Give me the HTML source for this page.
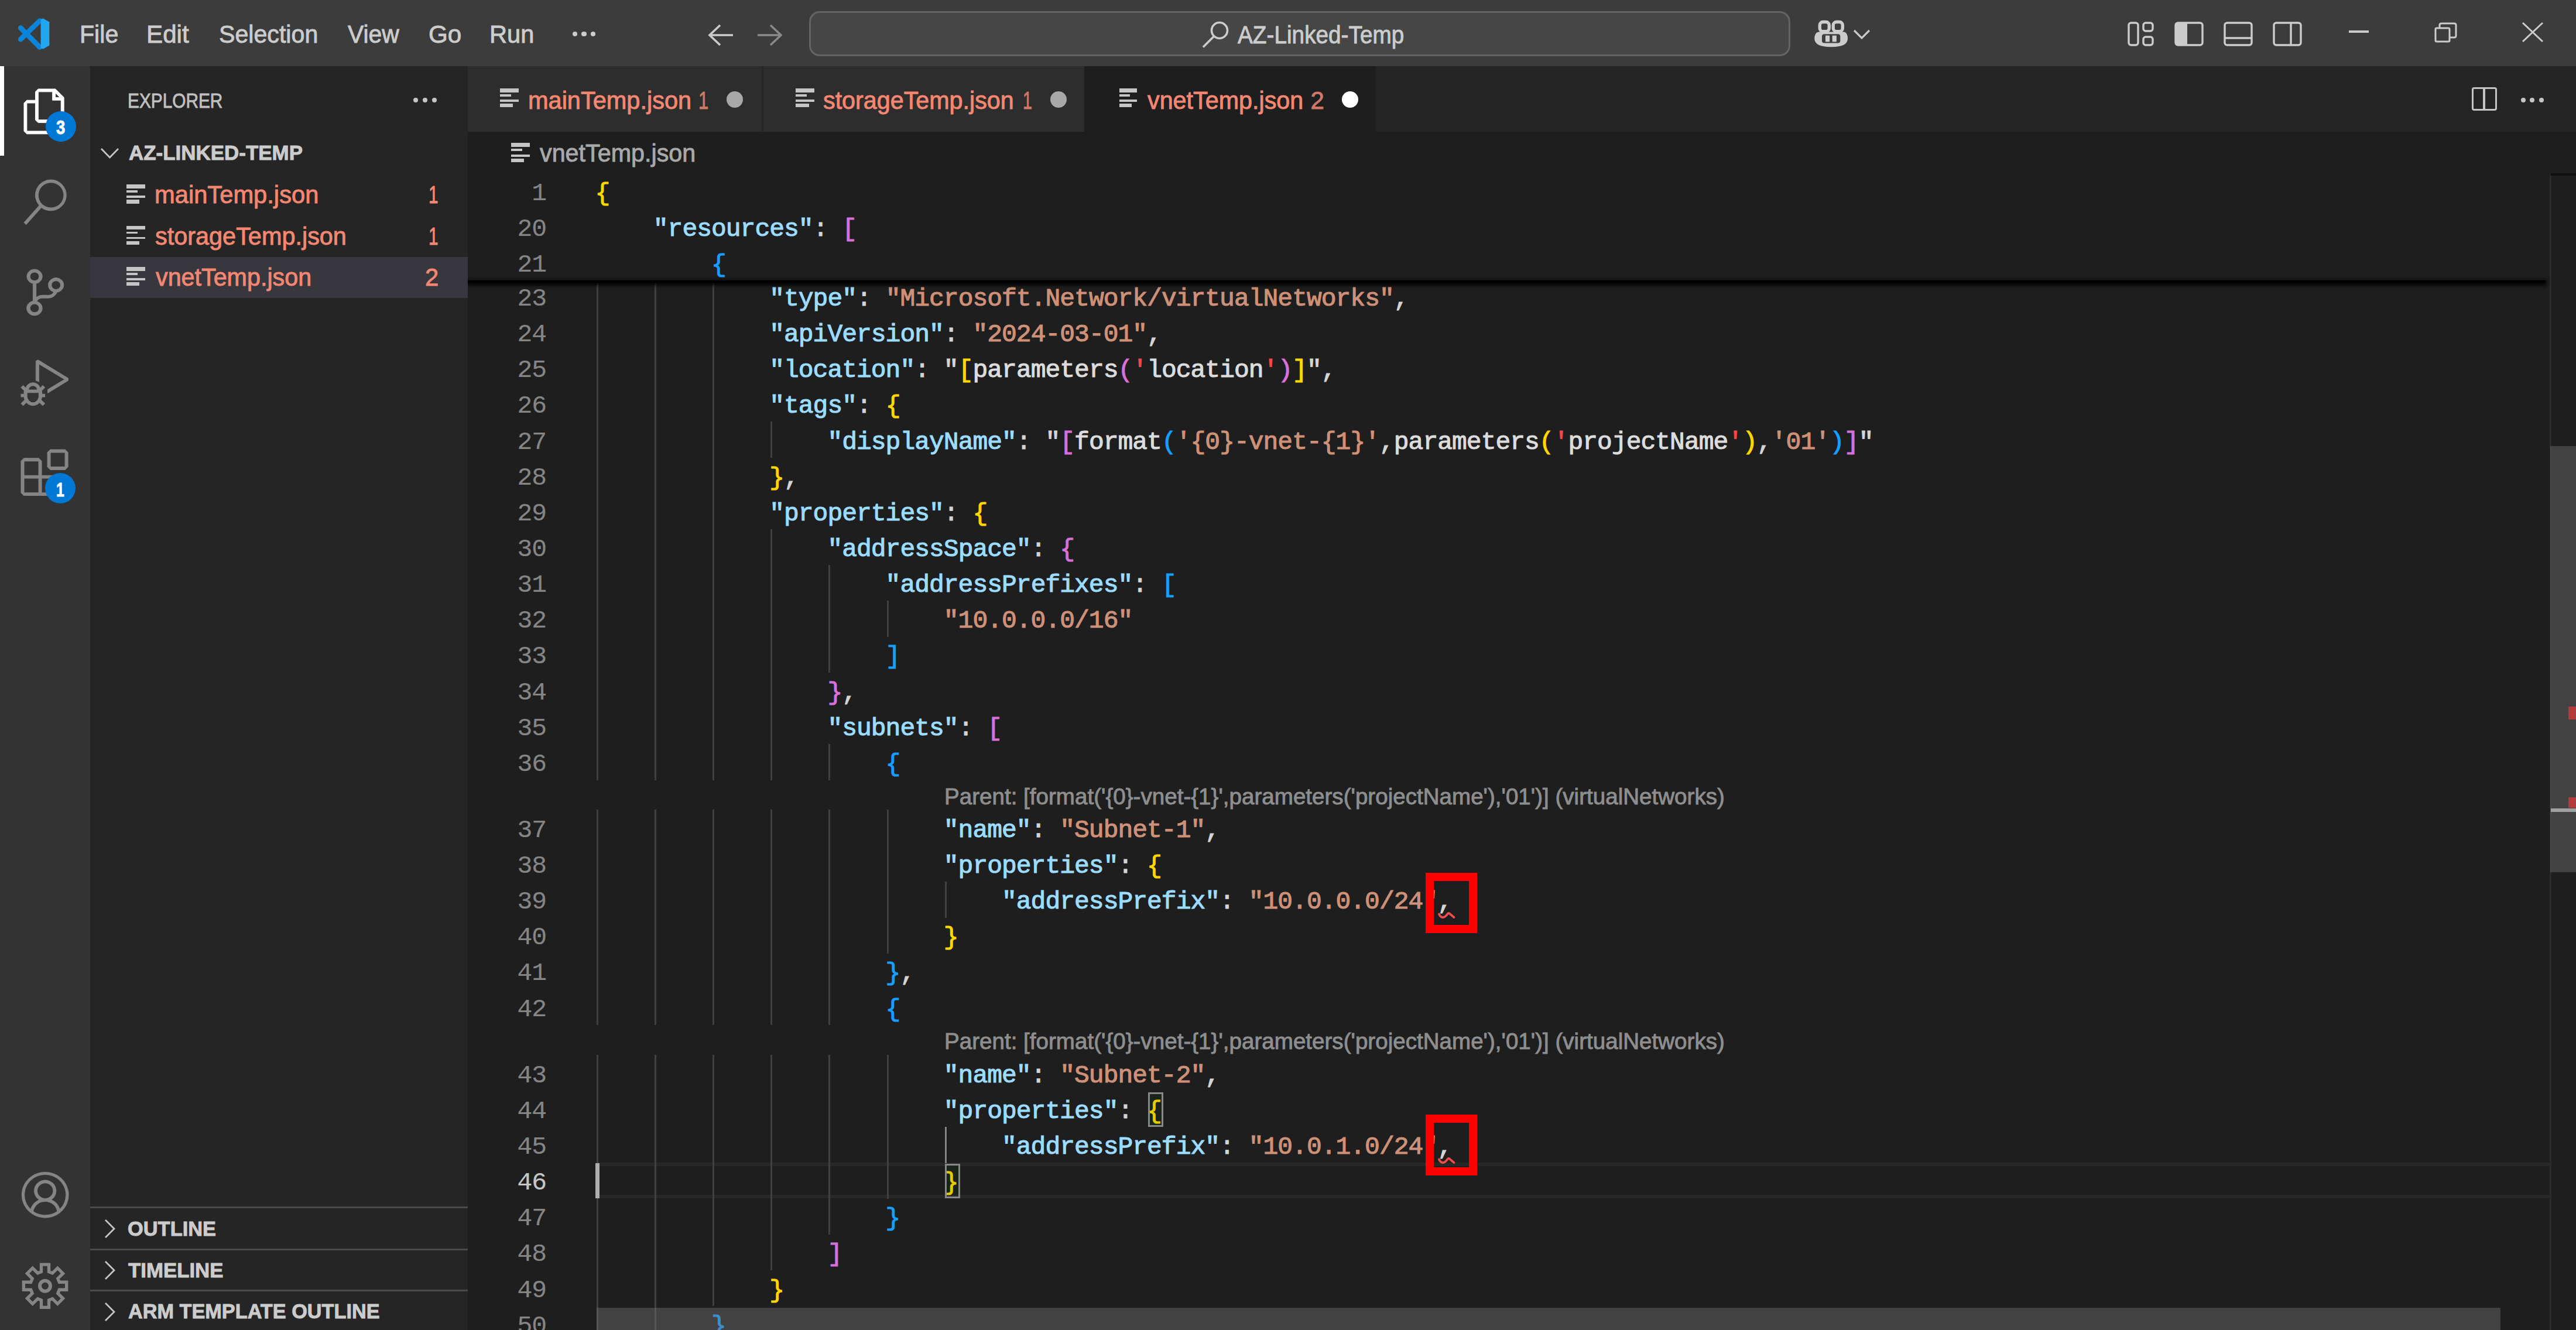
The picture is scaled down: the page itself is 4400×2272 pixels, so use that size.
<!DOCTYPE html><html><head><meta charset="utf-8"><title>vnetTemp.json - AZ-Linked-Temp</title><style>
html,body{margin:0;padding:0;width:4400px;height:2272px;overflow:hidden;background:#1E1E1E;}
.a{position:absolute;white-space:pre;}
.t{-webkit-text-stroke:0.9px;}
.m{position:absolute;white-space:pre;font-family:"Liberation Mono",monospace;-webkit-text-stroke:1.1px;}
svg{position:absolute;overflow:visible;}
</style></head><body>
<div class="a" style="left:1019.0px;top:1986.2px;width:3337.0px;height:6.0px;background:#282828;"></div>
<div class="a" style="left:1019.0px;top:2041.4px;width:3337.0px;height:6.0px;background:#282828;"></div>
<div class="a" style="left:1018.6px;top:475.5px;width:3.0px;height:62.4px;background:#404040;"></div>
<div class="a" style="left:1117.8px;top:475.5px;width:3.0px;height:62.4px;background:#404040;"></div>
<div class="a" style="left:1217.0px;top:475.5px;width:3.0px;height:62.4px;background:#404040;"></div>
<div class="a" style="left:1018.6px;top:536.6px;width:3.0px;height:62.4px;background:#404040;"></div>
<div class="a" style="left:1117.8px;top:536.6px;width:3.0px;height:62.4px;background:#404040;"></div>
<div class="a" style="left:1217.0px;top:536.6px;width:3.0px;height:62.4px;background:#404040;"></div>
<div class="a" style="left:1018.6px;top:597.8px;width:3.0px;height:62.4px;background:#404040;"></div>
<div class="a" style="left:1117.8px;top:597.8px;width:3.0px;height:62.4px;background:#404040;"></div>
<div class="a" style="left:1217.0px;top:597.8px;width:3.0px;height:62.4px;background:#404040;"></div>
<div class="a" style="left:1018.6px;top:658.9px;width:3.0px;height:62.4px;background:#404040;"></div>
<div class="a" style="left:1117.8px;top:658.9px;width:3.0px;height:62.4px;background:#404040;"></div>
<div class="a" style="left:1217.0px;top:658.9px;width:3.0px;height:62.4px;background:#404040;"></div>
<div class="a" style="left:1018.6px;top:720.1px;width:3.0px;height:62.4px;background:#404040;"></div>
<div class="a" style="left:1117.8px;top:720.1px;width:3.0px;height:62.4px;background:#404040;"></div>
<div class="a" style="left:1217.0px;top:720.1px;width:3.0px;height:62.4px;background:#404040;"></div>
<div class="a" style="left:1316.2px;top:720.1px;width:3.0px;height:62.4px;background:#404040;"></div>
<div class="a" style="left:1018.6px;top:781.2px;width:3.0px;height:62.4px;background:#404040;"></div>
<div class="a" style="left:1117.8px;top:781.2px;width:3.0px;height:62.4px;background:#404040;"></div>
<div class="a" style="left:1217.0px;top:781.2px;width:3.0px;height:62.4px;background:#404040;"></div>
<div class="a" style="left:1018.6px;top:842.4px;width:3.0px;height:62.4px;background:#404040;"></div>
<div class="a" style="left:1117.8px;top:842.4px;width:3.0px;height:62.4px;background:#404040;"></div>
<div class="a" style="left:1217.0px;top:842.4px;width:3.0px;height:62.4px;background:#404040;"></div>
<div class="a" style="left:1018.6px;top:903.6px;width:3.0px;height:62.4px;background:#404040;"></div>
<div class="a" style="left:1117.8px;top:903.6px;width:3.0px;height:62.4px;background:#404040;"></div>
<div class="a" style="left:1217.0px;top:903.6px;width:3.0px;height:62.4px;background:#404040;"></div>
<div class="a" style="left:1316.2px;top:903.6px;width:3.0px;height:62.4px;background:#404040;"></div>
<div class="a" style="left:1018.6px;top:964.7px;width:3.0px;height:62.4px;background:#404040;"></div>
<div class="a" style="left:1117.8px;top:964.7px;width:3.0px;height:62.4px;background:#404040;"></div>
<div class="a" style="left:1217.0px;top:964.7px;width:3.0px;height:62.4px;background:#404040;"></div>
<div class="a" style="left:1316.2px;top:964.7px;width:3.0px;height:62.4px;background:#404040;"></div>
<div class="a" style="left:1415.4px;top:964.7px;width:3.0px;height:62.4px;background:#404040;"></div>
<div class="a" style="left:1018.6px;top:1025.9px;width:3.0px;height:62.3px;background:#404040;"></div>
<div class="a" style="left:1117.8px;top:1025.9px;width:3.0px;height:62.3px;background:#404040;"></div>
<div class="a" style="left:1217.0px;top:1025.9px;width:3.0px;height:62.3px;background:#404040;"></div>
<div class="a" style="left:1316.2px;top:1025.9px;width:3.0px;height:62.3px;background:#404040;"></div>
<div class="a" style="left:1415.4px;top:1025.9px;width:3.0px;height:62.3px;background:#404040;"></div>
<div class="a" style="left:1514.6px;top:1025.9px;width:3.0px;height:62.3px;background:#404040;"></div>
<div class="a" style="left:1018.6px;top:1087.0px;width:3.0px;height:62.3px;background:#404040;"></div>
<div class="a" style="left:1117.8px;top:1087.0px;width:3.0px;height:62.3px;background:#404040;"></div>
<div class="a" style="left:1217.0px;top:1087.0px;width:3.0px;height:62.3px;background:#404040;"></div>
<div class="a" style="left:1316.2px;top:1087.0px;width:3.0px;height:62.3px;background:#404040;"></div>
<div class="a" style="left:1415.4px;top:1087.0px;width:3.0px;height:62.3px;background:#404040;"></div>
<div class="a" style="left:1018.6px;top:1148.2px;width:3.0px;height:62.3px;background:#404040;"></div>
<div class="a" style="left:1117.8px;top:1148.2px;width:3.0px;height:62.3px;background:#404040;"></div>
<div class="a" style="left:1217.0px;top:1148.2px;width:3.0px;height:62.3px;background:#404040;"></div>
<div class="a" style="left:1316.2px;top:1148.2px;width:3.0px;height:62.3px;background:#404040;"></div>
<div class="a" style="left:1018.6px;top:1209.3px;width:3.0px;height:62.3px;background:#404040;"></div>
<div class="a" style="left:1117.8px;top:1209.3px;width:3.0px;height:62.3px;background:#404040;"></div>
<div class="a" style="left:1217.0px;top:1209.3px;width:3.0px;height:62.3px;background:#404040;"></div>
<div class="a" style="left:1316.2px;top:1209.3px;width:3.0px;height:62.3px;background:#404040;"></div>
<div class="a" style="left:1018.6px;top:1270.5px;width:3.0px;height:62.3px;background:#404040;"></div>
<div class="a" style="left:1117.8px;top:1270.5px;width:3.0px;height:62.3px;background:#404040;"></div>
<div class="a" style="left:1217.0px;top:1270.5px;width:3.0px;height:62.3px;background:#404040;"></div>
<div class="a" style="left:1316.2px;top:1270.5px;width:3.0px;height:62.3px;background:#404040;"></div>
<div class="a" style="left:1415.4px;top:1270.5px;width:3.0px;height:62.3px;background:#404040;"></div>
<div class="a" style="left:1018.6px;top:1383.3px;width:3.0px;height:62.3px;background:#404040;"></div>
<div class="a" style="left:1117.8px;top:1383.3px;width:3.0px;height:62.3px;background:#404040;"></div>
<div class="a" style="left:1217.0px;top:1383.3px;width:3.0px;height:62.3px;background:#404040;"></div>
<div class="a" style="left:1316.2px;top:1383.3px;width:3.0px;height:62.3px;background:#404040;"></div>
<div class="a" style="left:1415.4px;top:1383.3px;width:3.0px;height:62.3px;background:#404040;"></div>
<div class="a" style="left:1514.6px;top:1383.3px;width:3.0px;height:62.3px;background:#404040;"></div>
<div class="a" style="left:1018.6px;top:1444.5px;width:3.0px;height:62.3px;background:#404040;"></div>
<div class="a" style="left:1117.8px;top:1444.5px;width:3.0px;height:62.3px;background:#404040;"></div>
<div class="a" style="left:1217.0px;top:1444.5px;width:3.0px;height:62.3px;background:#404040;"></div>
<div class="a" style="left:1316.2px;top:1444.5px;width:3.0px;height:62.3px;background:#404040;"></div>
<div class="a" style="left:1415.4px;top:1444.5px;width:3.0px;height:62.3px;background:#404040;"></div>
<div class="a" style="left:1514.6px;top:1444.5px;width:3.0px;height:62.3px;background:#404040;"></div>
<div class="a" style="left:1018.6px;top:1505.6px;width:3.0px;height:62.3px;background:#404040;"></div>
<div class="a" style="left:1117.8px;top:1505.6px;width:3.0px;height:62.3px;background:#404040;"></div>
<div class="a" style="left:1217.0px;top:1505.6px;width:3.0px;height:62.3px;background:#404040;"></div>
<div class="a" style="left:1316.2px;top:1505.6px;width:3.0px;height:62.3px;background:#404040;"></div>
<div class="a" style="left:1415.4px;top:1505.6px;width:3.0px;height:62.3px;background:#404040;"></div>
<div class="a" style="left:1514.6px;top:1505.6px;width:3.0px;height:62.3px;background:#404040;"></div>
<div class="a" style="left:1613.8px;top:1505.6px;width:3.0px;height:62.3px;background:#404040;"></div>
<div class="a" style="left:1018.6px;top:1566.8px;width:3.0px;height:62.3px;background:#404040;"></div>
<div class="a" style="left:1117.8px;top:1566.8px;width:3.0px;height:62.3px;background:#404040;"></div>
<div class="a" style="left:1217.0px;top:1566.8px;width:3.0px;height:62.3px;background:#404040;"></div>
<div class="a" style="left:1316.2px;top:1566.8px;width:3.0px;height:62.3px;background:#404040;"></div>
<div class="a" style="left:1415.4px;top:1566.8px;width:3.0px;height:62.3px;background:#404040;"></div>
<div class="a" style="left:1514.6px;top:1566.8px;width:3.0px;height:62.3px;background:#404040;"></div>
<div class="a" style="left:1018.6px;top:1627.9px;width:3.0px;height:62.3px;background:#404040;"></div>
<div class="a" style="left:1117.8px;top:1627.9px;width:3.0px;height:62.3px;background:#404040;"></div>
<div class="a" style="left:1217.0px;top:1627.9px;width:3.0px;height:62.3px;background:#404040;"></div>
<div class="a" style="left:1316.2px;top:1627.9px;width:3.0px;height:62.3px;background:#404040;"></div>
<div class="a" style="left:1415.4px;top:1627.9px;width:3.0px;height:62.3px;background:#404040;"></div>
<div class="a" style="left:1018.6px;top:1689.1px;width:3.0px;height:62.3px;background:#404040;"></div>
<div class="a" style="left:1117.8px;top:1689.1px;width:3.0px;height:62.3px;background:#404040;"></div>
<div class="a" style="left:1217.0px;top:1689.1px;width:3.0px;height:62.3px;background:#404040;"></div>
<div class="a" style="left:1316.2px;top:1689.1px;width:3.0px;height:62.3px;background:#404040;"></div>
<div class="a" style="left:1415.4px;top:1689.1px;width:3.0px;height:62.3px;background:#404040;"></div>
<div class="a" style="left:1018.6px;top:1802.2px;width:3.0px;height:62.3px;background:#404040;"></div>
<div class="a" style="left:1117.8px;top:1802.2px;width:3.0px;height:62.3px;background:#404040;"></div>
<div class="a" style="left:1217.0px;top:1802.2px;width:3.0px;height:62.3px;background:#404040;"></div>
<div class="a" style="left:1316.2px;top:1802.2px;width:3.0px;height:62.3px;background:#404040;"></div>
<div class="a" style="left:1415.4px;top:1802.2px;width:3.0px;height:62.3px;background:#404040;"></div>
<div class="a" style="left:1514.6px;top:1802.2px;width:3.0px;height:62.3px;background:#404040;"></div>
<div class="a" style="left:1018.6px;top:1863.4px;width:3.0px;height:62.3px;background:#404040;"></div>
<div class="a" style="left:1117.8px;top:1863.4px;width:3.0px;height:62.3px;background:#404040;"></div>
<div class="a" style="left:1217.0px;top:1863.4px;width:3.0px;height:62.3px;background:#404040;"></div>
<div class="a" style="left:1316.2px;top:1863.4px;width:3.0px;height:62.3px;background:#404040;"></div>
<div class="a" style="left:1415.4px;top:1863.4px;width:3.0px;height:62.3px;background:#404040;"></div>
<div class="a" style="left:1514.6px;top:1863.4px;width:3.0px;height:62.3px;background:#404040;"></div>
<div class="a" style="left:1018.6px;top:1924.5px;width:3.0px;height:62.3px;background:#404040;"></div>
<div class="a" style="left:1117.8px;top:1924.5px;width:3.0px;height:62.3px;background:#404040;"></div>
<div class="a" style="left:1217.0px;top:1924.5px;width:3.0px;height:62.3px;background:#404040;"></div>
<div class="a" style="left:1316.2px;top:1924.5px;width:3.0px;height:62.3px;background:#404040;"></div>
<div class="a" style="left:1415.4px;top:1924.5px;width:3.0px;height:62.3px;background:#404040;"></div>
<div class="a" style="left:1514.6px;top:1924.5px;width:3.0px;height:62.3px;background:#404040;"></div>
<div class="a" style="left:1613.8px;top:1924.5px;width:3.0px;height:62.3px;background:#858585;"></div>
<div class="a" style="left:1018.6px;top:1985.7px;width:3.0px;height:62.3px;background:#404040;"></div>
<div class="a" style="left:1117.8px;top:1985.7px;width:3.0px;height:62.3px;background:#404040;"></div>
<div class="a" style="left:1217.0px;top:1985.7px;width:3.0px;height:62.3px;background:#404040;"></div>
<div class="a" style="left:1316.2px;top:1985.7px;width:3.0px;height:62.3px;background:#404040;"></div>
<div class="a" style="left:1415.4px;top:1985.7px;width:3.0px;height:62.3px;background:#404040;"></div>
<div class="a" style="left:1514.6px;top:1985.7px;width:3.0px;height:62.3px;background:#404040;"></div>
<div class="a" style="left:1018.6px;top:2046.8px;width:3.0px;height:62.3px;background:#404040;"></div>
<div class="a" style="left:1117.8px;top:2046.8px;width:3.0px;height:62.3px;background:#404040;"></div>
<div class="a" style="left:1217.0px;top:2046.8px;width:3.0px;height:62.3px;background:#404040;"></div>
<div class="a" style="left:1316.2px;top:2046.8px;width:3.0px;height:62.3px;background:#404040;"></div>
<div class="a" style="left:1415.4px;top:2046.8px;width:3.0px;height:62.3px;background:#404040;"></div>
<div class="a" style="left:1018.6px;top:2108.0px;width:3.0px;height:62.3px;background:#404040;"></div>
<div class="a" style="left:1117.8px;top:2108.0px;width:3.0px;height:62.3px;background:#404040;"></div>
<div class="a" style="left:1217.0px;top:2108.0px;width:3.0px;height:62.3px;background:#404040;"></div>
<div class="a" style="left:1316.2px;top:2108.0px;width:3.0px;height:62.3px;background:#404040;"></div>
<div class="a" style="left:1018.6px;top:2169.1px;width:3.0px;height:62.3px;background:#404040;"></div>
<div class="a" style="left:1117.8px;top:2169.1px;width:3.0px;height:62.3px;background:#404040;"></div>
<div class="a" style="left:1217.0px;top:2169.1px;width:3.0px;height:62.3px;background:#404040;"></div>
<div class="a" style="left:1018.6px;top:2230.2px;width:3.0px;height:62.3px;background:#404040;"></div>
<div class="a" style="left:1117.8px;top:2230.2px;width:3.0px;height:62.3px;background:#404040;"></div>
<div class="m" style="left:1314.2px;top:488.9px;font-size:43.0px;line-height:43.0px;letter-spacing:-1.00px"><span style="color:#9CDCFE">"type"</span><span style="color:#D4D4D4">: </span><span style="color:#CE9178">"Microsoft.Network/virtualNetworks"</span><span style="color:#D4D4D4">,</span></div>
<div class="m" style="-webkit-text-stroke:0.2px;left:883.4px;top:488.9px;font-size:43.0px;line-height:43.0px;letter-spacing:-1.00px;color:#858585">23</div>
<div class="m" style="left:1314.2px;top:550.1px;font-size:43.0px;line-height:43.0px;letter-spacing:-1.00px"><span style="color:#9CDCFE">"apiVersion"</span><span style="color:#D4D4D4">: </span><span style="color:#CE9178">"2024-03-01"</span><span style="color:#D4D4D4">,</span></div>
<div class="m" style="-webkit-text-stroke:0.2px;left:883.4px;top:550.1px;font-size:43.0px;line-height:43.0px;letter-spacing:-1.00px;color:#858585">24</div>
<div class="m" style="left:1314.2px;top:611.2px;font-size:43.0px;line-height:43.0px;letter-spacing:-1.00px"><span style="color:#9CDCFE">"location"</span><span style="color:#D4D4D4">: </span><span style="color:#D4D4D4">"</span><span style="color:#FFD700">[</span><span style="color:#DCDCDC">parameters</span><span style="color:#DA70D6">(</span><span style="color:#F44747">'</span><span style="color:#DCDCDC">location</span><span style="color:#F44747">'</span><span style="color:#DA70D6">)</span><span style="color:#FFD700">]</span><span style="color:#D4D4D4">"</span><span style="color:#D4D4D4">,</span></div>
<div class="m" style="-webkit-text-stroke:0.2px;left:883.4px;top:611.2px;font-size:43.0px;line-height:43.0px;letter-spacing:-1.00px;color:#858585">25</div>
<div class="m" style="left:1314.2px;top:672.4px;font-size:43.0px;line-height:43.0px;letter-spacing:-1.00px"><span style="color:#9CDCFE">"tags"</span><span style="color:#D4D4D4">: </span><span style="color:#FFD700">{</span></div>
<div class="m" style="-webkit-text-stroke:0.2px;left:883.4px;top:672.4px;font-size:43.0px;line-height:43.0px;letter-spacing:-1.00px;color:#858585">26</div>
<div class="m" style="left:1413.4px;top:733.5px;font-size:43.0px;line-height:43.0px;letter-spacing:-1.00px"><span style="color:#9CDCFE">"displayName"</span><span style="color:#D4D4D4">: </span><span style="color:#D4D4D4">"</span><span style="color:#DA70D6">[</span><span style="color:#DCDCDC">format</span><span style="color:#179FFF">(</span><span style="color:#CE9178">'{0}-vnet-{1}'</span><span style="color:#D4D4D4">,</span><span style="color:#DCDCDC">parameters</span><span style="color:#FFD700">(</span><span style="color:#F44747">'</span><span style="color:#DCDCDC">projectName</span><span style="color:#F44747">'</span><span style="color:#FFD700">)</span><span style="color:#D4D4D4">,</span><span style="color:#CE9178">'01'</span><span style="color:#179FFF">)</span><span style="color:#DA70D6">]</span><span style="color:#D4D4D4">"</span></div>
<div class="m" style="-webkit-text-stroke:0.2px;left:883.4px;top:733.5px;font-size:43.0px;line-height:43.0px;letter-spacing:-1.00px;color:#858585">27</div>
<div class="m" style="left:1314.2px;top:794.7px;font-size:43.0px;line-height:43.0px;letter-spacing:-1.00px"><span style="color:#FFD700">}</span><span style="color:#D4D4D4">,</span></div>
<div class="m" style="-webkit-text-stroke:0.2px;left:883.4px;top:794.7px;font-size:43.0px;line-height:43.0px;letter-spacing:-1.00px;color:#858585">28</div>
<div class="m" style="left:1314.2px;top:855.8px;font-size:43.0px;line-height:43.0px;letter-spacing:-1.00px"><span style="color:#9CDCFE">"properties"</span><span style="color:#D4D4D4">: </span><span style="color:#FFD700">{</span></div>
<div class="m" style="-webkit-text-stroke:0.2px;left:883.4px;top:855.8px;font-size:43.0px;line-height:43.0px;letter-spacing:-1.00px;color:#858585">29</div>
<div class="m" style="left:1413.4px;top:917.0px;font-size:43.0px;line-height:43.0px;letter-spacing:-1.00px"><span style="color:#9CDCFE">"addressSpace"</span><span style="color:#D4D4D4">: </span><span style="color:#DA70D6">{</span></div>
<div class="m" style="-webkit-text-stroke:0.2px;left:883.4px;top:917.0px;font-size:43.0px;line-height:43.0px;letter-spacing:-1.00px;color:#858585">30</div>
<div class="m" style="left:1512.6px;top:978.1px;font-size:43.0px;line-height:43.0px;letter-spacing:-1.00px"><span style="color:#9CDCFE">"addressPrefixes"</span><span style="color:#D4D4D4">: </span><span style="color:#179FFF">[</span></div>
<div class="m" style="-webkit-text-stroke:0.2px;left:883.4px;top:978.1px;font-size:43.0px;line-height:43.0px;letter-spacing:-1.00px;color:#858585">31</div>
<div class="m" style="left:1611.8px;top:1039.3px;font-size:43.0px;line-height:43.0px;letter-spacing:-1.00px"><span style="color:#CE9178">"10.0.0.0/16"</span></div>
<div class="m" style="-webkit-text-stroke:0.2px;left:883.4px;top:1039.3px;font-size:43.0px;line-height:43.0px;letter-spacing:-1.00px;color:#858585">32</div>
<div class="m" style="left:1512.6px;top:1100.4px;font-size:43.0px;line-height:43.0px;letter-spacing:-1.00px"><span style="color:#179FFF">]</span></div>
<div class="m" style="-webkit-text-stroke:0.2px;left:883.4px;top:1100.4px;font-size:43.0px;line-height:43.0px;letter-spacing:-1.00px;color:#858585">33</div>
<div class="m" style="left:1413.4px;top:1161.6px;font-size:43.0px;line-height:43.0px;letter-spacing:-1.00px"><span style="color:#DA70D6">}</span><span style="color:#D4D4D4">,</span></div>
<div class="m" style="-webkit-text-stroke:0.2px;left:883.4px;top:1161.6px;font-size:43.0px;line-height:43.0px;letter-spacing:-1.00px;color:#858585">34</div>
<div class="m" style="left:1413.4px;top:1222.7px;font-size:43.0px;line-height:43.0px;letter-spacing:-1.00px"><span style="color:#9CDCFE">"subnets"</span><span style="color:#D4D4D4">: </span><span style="color:#DA70D6">[</span></div>
<div class="m" style="-webkit-text-stroke:0.2px;left:883.4px;top:1222.7px;font-size:43.0px;line-height:43.0px;letter-spacing:-1.00px;color:#858585">35</div>
<div class="m" style="left:1512.6px;top:1283.9px;font-size:43.0px;line-height:43.0px;letter-spacing:-1.00px"><span style="color:#179FFF">{</span></div>
<div class="m" style="-webkit-text-stroke:0.2px;left:883.4px;top:1283.9px;font-size:43.0px;line-height:43.0px;letter-spacing:-1.00px;color:#858585">36</div>
<div class="m" style="left:1611.8px;top:1396.7px;font-size:43.0px;line-height:43.0px;letter-spacing:-1.00px"><span style="color:#9CDCFE">"name"</span><span style="color:#D4D4D4">: </span><span style="color:#CE9178">"Subnet-1"</span><span style="color:#D4D4D4">,</span></div>
<div class="m" style="-webkit-text-stroke:0.2px;left:883.4px;top:1396.7px;font-size:43.0px;line-height:43.0px;letter-spacing:-1.00px;color:#858585">37</div>
<div class="m" style="left:1611.8px;top:1457.9px;font-size:43.0px;line-height:43.0px;letter-spacing:-1.00px"><span style="color:#9CDCFE">"properties"</span><span style="color:#D4D4D4">: </span><span style="color:#FFD700">{</span></div>
<div class="m" style="-webkit-text-stroke:0.2px;left:883.4px;top:1457.9px;font-size:43.0px;line-height:43.0px;letter-spacing:-1.00px;color:#858585">38</div>
<div class="m" style="left:1711.0px;top:1519.0px;font-size:43.0px;line-height:43.0px;letter-spacing:-1.00px"><span style="color:#9CDCFE">"addressPrefix"</span><span style="color:#D4D4D4">: </span><span style="color:#CE9178">"10.0.0.0/24"</span><span style="color:#D4D4D4">,</span></div>
<div class="m" style="-webkit-text-stroke:0.2px;left:883.4px;top:1519.0px;font-size:43.0px;line-height:43.0px;letter-spacing:-1.00px;color:#858585">39</div>
<div class="m" style="left:1611.8px;top:1580.2px;font-size:43.0px;line-height:43.0px;letter-spacing:-1.00px"><span style="color:#FFD700">}</span></div>
<div class="m" style="-webkit-text-stroke:0.2px;left:883.4px;top:1580.2px;font-size:43.0px;line-height:43.0px;letter-spacing:-1.00px;color:#858585">40</div>
<div class="m" style="left:1512.6px;top:1641.3px;font-size:43.0px;line-height:43.0px;letter-spacing:-1.00px"><span style="color:#179FFF">}</span><span style="color:#D4D4D4">,</span></div>
<div class="m" style="-webkit-text-stroke:0.2px;left:883.4px;top:1641.3px;font-size:43.0px;line-height:43.0px;letter-spacing:-1.00px;color:#858585">41</div>
<div class="m" style="left:1512.6px;top:1702.5px;font-size:43.0px;line-height:43.0px;letter-spacing:-1.00px"><span style="color:#179FFF">{</span></div>
<div class="m" style="-webkit-text-stroke:0.2px;left:883.4px;top:1702.5px;font-size:43.0px;line-height:43.0px;letter-spacing:-1.00px;color:#858585">42</div>
<div class="m" style="left:1611.8px;top:1815.6px;font-size:43.0px;line-height:43.0px;letter-spacing:-1.00px"><span style="color:#9CDCFE">"name"</span><span style="color:#D4D4D4">: </span><span style="color:#CE9178">"Subnet-2"</span><span style="color:#D4D4D4">,</span></div>
<div class="m" style="-webkit-text-stroke:0.2px;left:883.4px;top:1815.6px;font-size:43.0px;line-height:43.0px;letter-spacing:-1.00px;color:#858585">43</div>
<div class="m" style="left:1611.8px;top:1876.8px;font-size:43.0px;line-height:43.0px;letter-spacing:-1.00px"><span style="color:#9CDCFE">"properties"</span><span style="color:#D4D4D4">: </span><span style="color:#FFD700">{</span></div>
<div class="m" style="-webkit-text-stroke:0.2px;left:883.4px;top:1876.8px;font-size:43.0px;line-height:43.0px;letter-spacing:-1.00px;color:#858585">44</div>
<div class="m" style="left:1711.0px;top:1937.9px;font-size:43.0px;line-height:43.0px;letter-spacing:-1.00px"><span style="color:#9CDCFE">"addressPrefix"</span><span style="color:#D4D4D4">: </span><span style="color:#CE9178">"10.0.1.0/24"</span><span style="color:#D4D4D4">,</span></div>
<div class="m" style="-webkit-text-stroke:0.2px;left:883.4px;top:1937.9px;font-size:43.0px;line-height:43.0px;letter-spacing:-1.00px;color:#858585">45</div>
<div class="m" style="left:1611.8px;top:1999.1px;font-size:43.0px;line-height:43.0px;letter-spacing:-1.00px"><span style="color:#FFD700">}</span></div>
<div class="m" style="-webkit-text-stroke:0.2px;left:883.4px;top:1999.1px;font-size:43.0px;line-height:43.0px;letter-spacing:-1.00px;color:#C6C6C6">46</div>
<div class="m" style="left:1512.6px;top:2060.2px;font-size:43.0px;line-height:43.0px;letter-spacing:-1.00px"><span style="color:#179FFF">}</span></div>
<div class="m" style="-webkit-text-stroke:0.2px;left:883.4px;top:2060.2px;font-size:43.0px;line-height:43.0px;letter-spacing:-1.00px;color:#858585">47</div>
<div class="m" style="left:1413.4px;top:2121.4px;font-size:43.0px;line-height:43.0px;letter-spacing:-1.00px"><span style="color:#DA70D6">]</span></div>
<div class="m" style="-webkit-text-stroke:0.2px;left:883.4px;top:2121.4px;font-size:43.0px;line-height:43.0px;letter-spacing:-1.00px;color:#858585">48</div>
<div class="m" style="left:1314.2px;top:2182.5px;font-size:43.0px;line-height:43.0px;letter-spacing:-1.00px"><span style="color:#FFD700">}</span></div>
<div class="m" style="-webkit-text-stroke:0.2px;left:883.4px;top:2182.5px;font-size:43.0px;line-height:43.0px;letter-spacing:-1.00px;color:#858585">49</div>
<div class="m" style="left:1215.0px;top:2243.7px;font-size:43.0px;line-height:43.0px;letter-spacing:-1.00px"><span style="color:#179FFF">}</span></div>
<div class="m" style="-webkit-text-stroke:0.2px;left:883.4px;top:2243.7px;font-size:43.0px;line-height:43.0px;letter-spacing:-1.00px;color:#858585">50</div>
<div class="a" style="left:1961.0px;top:1866.0px;width:19.8px;height:53.1px;border:3px solid #888888;background:rgba(0,100,0,0.1)"></div>
<div class="a" style="left:1613.8px;top:1988.2px;width:19.8px;height:53.1px;border:3px solid #888888;background:rgba(0,100,0,0.1)"></div>
<div class="a" style="left:1017.1px;top:1987.2px;width:7.0px;height:60.2px;background:#AEAFAD;"></div>
<div class="a" style="left:2434.9px;top:1490.9px;width:59.7px;height:74.7px;border:14.2px solid #FF0000"></div>
<svg style="left:2455px;top:1556.7px" width="32" height="14" viewBox="0 0 32 14"><path d="M3 4.5 Q5.5 10.5 10 10 Q14 9.5 18 3.5 Q20 2 23 5.5 L28.5 10" stroke="#F14C4C" stroke-width="3.8" stroke-linecap="round" fill="none"/></svg>
<div class="a" style="left:2434.9px;top:1903.9px;width:59.7px;height:75.7px;border:14.2px solid #FF0000"></div>
<svg style="left:2455px;top:1975.6px" width="32" height="14" viewBox="0 0 32 14"><path d="M3 4.5 Q5.5 10.5 10 10 Q14 9.5 18 3.5 Q20 2 23 5.5 L28.5 10" stroke="#F14C4C" stroke-width="3.8" stroke-linecap="round" fill="none"/></svg>
<div class="a" style="left:799.0px;top:296.0px;width:3549.0px;height:183.0px;background:#1E1E1E;"></div>
<div class="m" style="left:1016.6px;top:308.8px;font-size:43.0px;line-height:43.0px;letter-spacing:-1.00px"><span style="color:#FFD700">{</span></div>
<div class="m" style="-webkit-text-stroke:0.2px;left:908.2px;top:308.8px;font-size:43.0px;line-height:43.0px;letter-spacing:-1.00px;color:#858585">1</div>
<div class="m" style="left:1115.8px;top:369.8px;font-size:43.0px;line-height:43.0px;letter-spacing:-1.00px"><span style="color:#9CDCFE">"resources"</span><span style="color:#D4D4D4">: </span><span style="color:#DA70D6">[</span></div>
<div class="m" style="-webkit-text-stroke:0.2px;left:883.4px;top:369.8px;font-size:43.0px;line-height:43.0px;letter-spacing:-1.00px;color:#858585">20</div>
<div class="m" style="left:1215.0px;top:430.8px;font-size:43.0px;line-height:43.0px;letter-spacing:-1.00px"><span style="color:#179FFF">{</span></div>
<div class="m" style="-webkit-text-stroke:0.2px;left:883.4px;top:430.8px;font-size:43.0px;line-height:43.0px;letter-spacing:-1.00px;color:#858585">21</div>
<div class="a" style="left:799px;top:479px;width:3549px;height:4px;box-shadow:0 2px 6px 2px #000000;background:#000"></div>
<div class="a" style="left:4355.0px;top:296.0px;width:3.0px;height:1976.0px;background:#2B2B2B;"></div>
<div class="a" style="left:4356px;top:296px;width:44px;height:4px;background:#000;opacity:0.45"></div>
<div class="a" style="left:4356.0px;top:762.0px;width:44.0px;height:727.6px;background:rgba(121,121,121,0.4);"></div>
<div class="a" style="left:4387.0px;top:1207.0px;width:13.0px;height:21.5px;background:#B13A3A;"></div>
<div class="a" style="left:4387.0px;top:1362.0px;width:13.0px;height:18.0px;background:#B13A3A;"></div>
<div class="a" style="left:4357.0px;top:1381.0px;width:43.0px;height:6.0px;background:#A0A0A0;"></div>
<div class="a" style="left:1019.0px;top:2234.3px;width:3252.0px;height:37.7px;background:rgba(121,121,121,0.4);"></div>
<div class="a" style="left:799.0px;top:224.5px;width:3601.0px;height:71.5px;background:#1E1E1E;"></div>
<div class="a" style="left:799.0px;top:112.5px;width:3601.0px;height:112.0px;background:#252526;"></div>
<div class="a" style="left:799.0px;top:112.5px;width:501.5px;height:112.0px;background:#2D2D2D;"></div>
<div class="a" style="left:1303.5px;top:112.5px;width:548.5px;height:112.0px;background:#2D2D2D;"></div>
<div class="a" style="left:1852.0px;top:112.5px;width:498.0px;height:112.0px;background:#1E1E1E;"></div>
<div class="a" style="left:853.7px;top:151.0px;width:32.5px;height:6.7px;background:#C5C5C5;"></div>
<div class="a" style="left:853.7px;top:161.1px;width:19.2px;height:3.7px;background:#C5C5C5;"></div>
<div class="a" style="left:853.7px;top:170.2px;width:32.5px;height:3.7px;background:#C5C5C5;"></div>
<div class="a" style="left:853.7px;top:177.1px;width:22.8px;height:6.4px;background:#C5C5C5;"></div>
<div class="a" style="left:1359.3px;top:151.0px;width:31.8px;height:6.7px;background:#C5C5C5;"></div>
<div class="a" style="left:1359.3px;top:161.1px;width:18.8px;height:3.7px;background:#C5C5C5;"></div>
<div class="a" style="left:1359.3px;top:170.2px;width:31.8px;height:3.7px;background:#C5C5C5;"></div>
<div class="a" style="left:1359.3px;top:177.1px;width:22.3px;height:6.4px;background:#C5C5C5;"></div>
<div class="a" style="left:1912.2px;top:151.0px;width:30.0px;height:6.7px;background:#C5C5C5;"></div>
<div class="a" style="left:1912.2px;top:161.1px;width:17.7px;height:3.7px;background:#C5C5C5;"></div>
<div class="a" style="left:1912.2px;top:170.2px;width:30.0px;height:3.7px;background:#C5C5C5;"></div>
<div class="a" style="left:1912.2px;top:177.1px;width:21.0px;height:6.4px;background:#C5C5C5;"></div>
<div class="a" style="left:873.4px;top:243.7px;width:31.6px;height:7.0px;background:#C5C5C5;"></div>
<div class="a" style="left:873.4px;top:254.2px;width:18.6px;height:3.9px;background:#C5C5C5;"></div>
<div class="a" style="left:873.4px;top:263.7px;width:31.6px;height:3.9px;background:#C5C5C5;"></div>
<div class="a" style="left:873.4px;top:270.8px;width:22.1px;height:6.7px;background:#C5C5C5;"></div>
<div class="a" style="left:1241.0px;top:156.0px;width:28.0px;height:28.0px;border-radius:50%;background:#A8A8A8"></div>
<div class="a" style="left:1794.0px;top:156.0px;width:28.0px;height:28.0px;border-radius:50%;background:#A8A8A8"></div>
<div class="a" style="left:2292.0px;top:156.0px;width:28.0px;height:28.0px;border-radius:50%;background:#FFFFFF"></div>
<div class="a" style="left:4222px;top:149px;width:37px;height:34px;border:3.5px solid #C5C5C5;border-radius:4px"></div>
<div class="a" style="left:4241.0px;top:150.0px;width:3.5px;height:37.0px;background:#C5C5C5;"></div>
<div class="a" style="left:4305.5px;top:167.0px;width:8.0px;height:8.0px;border-radius:50%;background:#C5C5C5"></div>
<div class="a" style="left:4321.0px;top:167.0px;width:8.0px;height:8.0px;border-radius:50%;background:#C5C5C5"></div>
<div class="a" style="left:4336.5px;top:167.0px;width:8.0px;height:8.0px;border-radius:50%;background:#C5C5C5"></div>
<div class="a" style="left:154.0px;top:112.5px;width:645.0px;height:2159.5px;background:#252526;"></div>
<div class="a" style="left:705.8px;top:166.8px;width:8.4px;height:8.4px;border-radius:50%;background:#C5C5C5"></div>
<div class="a" style="left:721.8px;top:166.8px;width:8.4px;height:8.4px;border-radius:50%;background:#C5C5C5"></div>
<div class="a" style="left:737.8px;top:166.8px;width:8.4px;height:8.4px;border-radius:50%;background:#C5C5C5"></div>
<svg style="left:171px;top:251px" width="33" height="22" viewBox="0 0 33 22"><path d="M2 3 L16.5 18 L31 3" stroke="#C5C5C5" stroke-width="2.8" fill="none"/></svg>
<div class="a" style="left:154.0px;top:438.5px;width:645.0px;height:70.5px;background:#37373D;"></div>
<div class="a" style="left:216.2px;top:315.3px;width:31.4px;height:6.7px;background:#C5C5C5;"></div>
<div class="a" style="left:216.2px;top:325.3px;width:18.5px;height:3.7px;background:#C5C5C5;"></div>
<div class="a" style="left:216.2px;top:334.4px;width:31.4px;height:3.7px;background:#C5C5C5;"></div>
<div class="a" style="left:216.2px;top:341.2px;width:22.0px;height:6.4px;background:#C5C5C5;"></div>
<div class="a" style="left:216.2px;top:385.6px;width:31.4px;height:6.7px;background:#C5C5C5;"></div>
<div class="a" style="left:216.2px;top:395.6px;width:18.5px;height:3.7px;background:#C5C5C5;"></div>
<div class="a" style="left:216.2px;top:404.7px;width:31.4px;height:3.7px;background:#C5C5C5;"></div>
<div class="a" style="left:216.2px;top:411.5px;width:22.0px;height:6.4px;background:#C5C5C5;"></div>
<div class="a" style="left:216.2px;top:455.9px;width:31.4px;height:6.7px;background:#C5C5C5;"></div>
<div class="a" style="left:216.2px;top:465.9px;width:18.5px;height:3.7px;background:#C5C5C5;"></div>
<div class="a" style="left:216.2px;top:475.0px;width:31.4px;height:3.7px;background:#C5C5C5;"></div>
<div class="a" style="left:216.2px;top:481.8px;width:22.0px;height:6.4px;background:#C5C5C5;"></div>
<div class="a" style="left:154.0px;top:2061.0px;width:645.0px;height:3.2px;background:#4A4A4B;"></div>
<div class="a" style="left:154.0px;top:2132.5px;width:645.0px;height:3.2px;background:#4A4A4B;"></div>
<div class="a" style="left:154.0px;top:2203.0px;width:645.0px;height:3.2px;background:#4A4A4B;"></div>
<svg style="left:176px;top:2082.0px" width="24" height="34" viewBox="0 0 24 34"><path d="M4 2 L19 17 L4 32" stroke="#C5C5C5" stroke-width="2.8" fill="none"/></svg>
<svg style="left:176px;top:2153.0px" width="24" height="34" viewBox="0 0 24 34"><path d="M4 2 L19 17 L4 32" stroke="#C5C5C5" stroke-width="2.8" fill="none"/></svg>
<svg style="left:176px;top:2223.5px" width="24" height="34" viewBox="0 0 24 34"><path d="M4 2 L19 17 L4 32" stroke="#C5C5C5" stroke-width="2.8" fill="none"/></svg>
<div class="a" style="left:0.0px;top:112.5px;width:154.0px;height:2159.5px;background:#333333;"></div>
<div class="a" style="left:0.0px;top:112.5px;width:6.5px;height:153.5px;background:#FFFFFF;"></div>
<svg style="left:40.6px;top:151.6px" width="71.4" height="76.8" viewBox="1 0 22 24" preserveAspectRatio="none"><path fill="#FFFFFF" fill-rule="evenodd" stroke="#FFFFFF" stroke-width="0.308" stroke-linejoin="round" d="M17.5 0h-9L7 1.5V6H2.5L1 7.5v15.07L2.5 24h12.07L16 22.57V18h4.7l1.3-1.43V4.5L17.5 0zm0 2.12l2.38 2.38H17.5V2.12zm-3 20.38h-12v-15H7v9.07L8.5 18h6v4.5zm6-6h-12v-15H16V6h4.5v10.5z"/></svg>
<svg style="left:40.6px;top:306.6px" width="74.4" height="76.8" viewBox="1 0 23 24" preserveAspectRatio="none"><path fill="#858585" fill-rule="evenodd" stroke="#858585" stroke-width="0.309" stroke-linejoin="round" d="M15.25 0a8.25 8.25 0 0 0-6.18 13.72L1 22.88l1.12 1.12 8.05-9.12A8.251 8.251 0 1 0 15.25.01V0zm0 15a6.75 6.75 0 1 1 0-13.5 6.75 6.75 0 0 1 0 13.5z"/></svg>
<svg style="left:44.8px;top:460.0px" width="64.1" height="79.0" viewBox="2.8 0 18.3 24" preserveAspectRatio="none"><path fill="#858585" fill-rule="evenodd" stroke="#858585" stroke-width="0.285" stroke-linejoin="round" d="M21.007 8.222A3.738 3.738 0 0 0 15.045 5.2a3.737 3.737 0 0 0 1.156 6.583 2.988 2.988 0 0 1-2.668 1.67h-2.99a4.456 4.456 0 0 0-2.989 1.165V7.4a3.737 3.737 0 1 0-1.494 0v9.117a3.776 3.776 0 1 0 1.816.099 2.99 2.99 0 0 1 2.668-1.667h2.99a4.484 4.484 0 0 0 4.223-3.039 3.736 3.736 0 0 0 3.25-3.687zM4.565 3.738a2.242 2.242 0 1 1 4.484 0 2.242 2.242 0 0 1-4.484 0zm4.484 16.441a2.242 2.242 0 1 1-4.484 0 2.242 2.242 0 0 1 4.484 0zm8.221-9.715a2.242 2.242 0 1 1 0-4.485 2.242 2.242 0 0 1 0 4.485z"/></svg>
<svg style="left:36.4px;top:614.6px" width="81.1" height="77.7" viewBox="0 0 24 24" preserveAspectRatio="none"><path fill="#858585" fill-rule="evenodd" stroke="#858585" stroke-width="0.296" stroke-linejoin="round" d="M10.94 13.5l-1.32 1.32a3.73 3.73 0 0 0-7.24 0L1.06 13.5 0 14.56l1.72 1.72-.22.22V18H0v1.5h1.5v.08c.077.489.214.966.41 1.42L0 22.94 1.06 24l1.65-1.65A4.308 4.308 0 0 0 6 24a4.31 4.31 0 0 0 3.29-1.65L10.94 24 12 22.94 10.09 21c.198-.464.336-.951.41-1.45v-.1H12V18h-1.5v-1.5l-.22-.22L12 14.56l-1.06-1.06zM6 13.5a2.25 2.25 0 0 1 2.25 2.25h-4.5A2.25 2.25 0 0 1 6 13.5zm3 6a3.33 3.33 0 0 1-3 3 3.33 3.33 0 0 1-3-3v-2.25h6v2.25zm14.76-9.9v1.26L13.5 17.37V15.6l8.5-5.37L9 2v9.46a5.07 5.07 0 0 0-1.5-.72V.63L8.64 0l15.12 9.6z"/></svg>
<svg style="left:36.4px;top:768.4px" width="80.1" height="78.6" viewBox="0 0 24 24" preserveAspectRatio="none"><path fill="#858585" fill-rule="evenodd" stroke="#858585" stroke-width="0.300" stroke-linejoin="round" d="M13.5 1.5L15 0h7.5L24 1.5V9l-1.5 1.5H15L13.5 9V1.5zm1.5 0V9h7.5V1.5H15zM0 15V6l1.5-1.5H9L10.5 6v7.5H18l1.5 1.5v7.5L18 24H1.5L0 22.5V15zm9-1.5V6H1.5v7.5H9zM9 15H1.5v7.5H9V15zm1.5 7.5H18V15h-7.5v7.5z"/></svg>
<svg style="left:37.0px;top:2002.0px" width="80.4" height="78.4" viewBox="0 0 16 16" preserveAspectRatio="none"><path fill="#858585" fill-rule="nonzero" stroke="#858585" stroke-width="0.060" stroke-linejoin="round" d="M16 7.992C16 3.58 12.416 0 8 0S0 3.58 0 7.992c0 2.43 1.104 4.62 2.832 6.09.016.016.032.016.032.032.144.112.288.224.448.336.08.048.144.111.224.175A7.98 7.98 0 0 0 8.016 16a7.98 7.98 0 0 0 4.48-1.375c.08-.048.144-.111.224-.16.144-.111.304-.223.448-.335.016-.016.032-.016.032-.032 1.696-1.487 2.8-3.676 2.8-6.106zm-8 7.001c-1.504 0-2.88-.48-4.016-1.279.016-.128.048-.255.08-.383a4.17 4.17 0 0 1 .416-.991c.176-.304.384-.576.64-.816.24-.24.528-.463.816-.639.304-.176.624-.304.976-.4A4.15 4.15 0 0 1 8 10.342a4.185 4.185 0 0 1 2.928 1.166c.368.368.656.8.864 1.295.112.288.192.592.24.911A7.03 7.03 0 0 1 8 14.993zm-2.448-7.4a2.49 2.49 0 0 1-.208-1.024c0-.351.064-.703.208-1.023.144-.32.336-.607.576-.847.24-.24.528-.431.848-.575.32-.144.672-.208 1.024-.208.368 0 .704.064 1.024.208.32.144.608.336.848.575.24.24.432.528.576.847.144.32.208.672.208 1.023 0 .368-.064.704-.208 1.023a2.84 2.84 0 0 1-.576.848 2.840 2.84 0 0 1-.848.575 2.715 2.715 0 0 1-2.064 0 2.84 2.84 0 0 1-.848-.575 2.526 2.526 0 0 1-.56-.848zm7.424 5.306c0-.032-.016-.048-.016-.08a5.220 5.22 0 0 0-.688-1.406 4.883 4.883 0 0 0-1.088-1.135 5.207 5.207 0 0 0-1.040-.608 2.82 2.82 0 0 0 .464-.383 4.2 4.2 0 0 0 .624-.784 3.624 3.624 0 0 0 .528-1.934 3.710 3.71 0 0 0-.288-1.470 3.799 3.799 0 0 0-.816-1.199 3.845 3.845 0 0 0-1.2-.8 3.720 3.72 0 0 0-1.472-.287 3.720 3.72 0 0 0-1.472.288 3.631 3.631 0 0 0-1.2.815 3.840 3.84 0 0 0-.8 1.199 3.710 3.71 0 0 0-.288 1.470c0 .352.048.688.144 1.007.096.336.224.64.4.927.16.288.384.544.624.784.144.144.304.271.48.383a5.120 5.12 0 0 0-1.040.624c-.416.32-.784.703-1.088 1.119a4.999 4.999 0 0 0-.688 1.406c-.016.032-.016.064-.016.08C1.776 11.636.992 9.91.992 7.992.992 4.14 4.144.991 8 .991s7.008 3.149 7.008 7.001a6.960 6.96 0 0 1-2.032 4.907z"/></svg>
<svg style="left:37.3px;top:2157.5px" width="80" height="77.5" viewBox="0 0 24 23.25"><path d="M10.05 4.70 L10.05 1.00 L13.95 1.00 L13.95 4.70 L15.78 5.46 L18.40 2.84 L21.16 5.60 L18.54 8.22 L19.30 10.05 L23.00 10.05 L23.00 13.95 L19.30 13.95 L18.54 15.78 L21.16 18.40 L18.40 21.16 L15.78 18.54 L13.95 19.30 L13.95 23.00 L10.05 23.00 L10.05 19.30 L8.22 18.54 L5.60 21.16 L2.84 18.40 L5.46 15.78 L4.70 13.95 L1.00 13.95 L1.00 10.05 L4.70 10.05 L5.46 8.22 L2.84 5.60 L5.60 2.84 L8.22 5.46 Z" stroke="#858585" stroke-width="1.6" stroke-linejoin="miter" fill="none" transform="translate(0,-0.37)"/><circle cx="12" cy="11.63" r="2.7" stroke="#858585" stroke-width="1.8" fill="none"/></svg>
<div class="a" style="left:77.7px;top:189.5px;width:52.0px;height:52.0px;border-radius:50%;background:#0078D4"></div>
<div class="a" style="left:77.0px;top:808.0px;width:52.0px;height:52.0px;border-radius:50%;background:#0078D4"></div>
<div class="a" style="left:0.0px;top:0.0px;width:4400.0px;height:112.5px;background:#3C3C3C;"></div>
<svg style="left:20px;top:20px" width="80" height="75" viewBox="20 20 80 75"><path d="M67.9 35.5 L35.2 67.2 M35.2 47.6 L67.9 80.6" stroke="#0B85D9" stroke-width="8.6" stroke-linecap="round" fill="none"/><path fill="#22A6F0" d="M69.6 33 L73.6 31.4 L84.3 37.6 V77.4 L73.6 83.7 L69.6 82 Z"/></svg>
<div class="a" style="left:977.8px;top:53.8px;width:8.4px;height:8.4px;border-radius:50%;background:#CCCCCC"></div>
<div class="a" style="left:993.3px;top:53.8px;width:8.4px;height:8.4px;border-radius:50%;background:#CCCCCC"></div>
<div class="a" style="left:1008.8px;top:53.8px;width:8.4px;height:8.4px;border-radius:50%;background:#CCCCCC"></div>
<svg style="left:1208px;top:40px" width="46" height="40" viewBox="0 0 46 40"><path d="M22 3 L4 20 L22 37 M4 20 H44" stroke="#CCCCCC" stroke-width="3.6" fill="none"/></svg>
<svg style="left:1292px;top:40px" width="46" height="40" viewBox="0 0 46 40"><path d="M24 3 L42 20 L24 37 M42 20 H2" stroke="#8A8A8A" stroke-width="3.6" fill="none"/></svg>
<div class="a" style="left:1381.5px;top:19.2px;width:1670.3px;height:70.6px;border:3.2px solid #646464;border-radius:18px;background:#464646"></div>
<svg style="left:2052px;top:35px" width="50" height="48" viewBox="0 0 50 48"><circle cx="31" cy="17" r="13.5" stroke="#CCCCCC" stroke-width="3.6" fill="none"/><path d="M21.5 27 L3 45.5" stroke="#CCCCCC" stroke-width="3.8"/></svg>
<svg style="left:3095px;top:30px" width="66" height="55" viewBox="3095 30 66 55"><rect x="3108.3" y="37.5" width="16" height="16.3" rx="5.5" stroke="#CCCCCC" stroke-width="5.4" fill="none"/><rect x="3131.3" y="37.5" width="16" height="16.3" rx="5.5" stroke="#CCCCCC" stroke-width="5.4" fill="none"/><path fill="#CCCCCC" fill-rule="evenodd" d="M3106 54.5 H3150 Q3156 56 3156 66 Q3156 80.2 3128 80.2 Q3099.3 80.2 3099.3 66 Q3099.3 56 3106 54.5 Z M3116 58.2 H3139.3 Q3143.3 58.2 3143.3 62 V69.5 Q3143.3 73.4 3139.3 73.4 H3116 Q3112 73.4 3112 69.5 V62 Q3112 58.2 3116 58.2 Z"/><rect x="3118" y="60.7" width="7.2" height="10.7" fill="#CCCCCC"/><rect x="3129.7" y="60.7" width="7.2" height="10.7" fill="#CCCCCC"/></svg>
<svg style="left:3165px;top:49px" width="30" height="20" viewBox="0 0 30 20"><path d="M2 3 L15 16 L28 3" stroke="#CCCCCC" stroke-width="3.2" fill="none"/></svg>
<svg style="left:3634px;top:37px" width="46" height="42" viewBox="0 0 46 42"><rect x="2" y="2" width="16" height="38" rx="4" stroke="#CCCCCC" stroke-width="3.4" fill="none"/><rect x="27" y="2" width="16" height="14" rx="4" stroke="#CCCCCC" stroke-width="3.4" fill="none"/><rect x="27" y="26" width="16" height="14" rx="4" stroke="#CCCCCC" stroke-width="3.4" fill="none"/></svg>
<svg style="left:3714px;top:37px" width="50" height="42" viewBox="0 0 50 42"><rect x="2" y="2" width="46" height="38" rx="4" stroke="#CCCCCC" stroke-width="3.4" fill="none"/><rect x="2" y="2" width="20" height="38" rx="3" fill="#CCCCCC"/></svg>
<svg style="left:3798px;top:37px" width="50" height="42" viewBox="0 0 50 42"><rect x="2" y="2" width="46" height="38" rx="4" stroke="#CCCCCC" stroke-width="3.4" fill="none"/><path d="M2 28 H48" stroke="#CCCCCC" stroke-width="3.4"/></svg>
<svg style="left:3882px;top:37px" width="50" height="42" viewBox="0 0 50 42"><rect x="2" y="2" width="46" height="38" rx="4" stroke="#CCCCCC" stroke-width="3.4" fill="none"/><path d="M31 2 V40" stroke="#CCCCCC" stroke-width="3.4"/></svg>
<div class="a" style="left:4012.0px;top:52.0px;width:34.0px;height:3.5px;background:#CCCCCC;"></div>
<svg style="left:4158px;top:37px" width="40" height="36" viewBox="0 0 40 36"><rect x="2" y="11" width="24" height="23" rx="2" stroke="#CCCCCC" stroke-width="3" fill="none"/><path d="M9 11 V6 Q9 3 12 3 H34 Q37 3 37 6 V24 Q37 27 34 27 H26" stroke="#CCCCCC" stroke-width="3" fill="none"/></svg>
<svg style="left:4307px;top:37px" width="38" height="36" viewBox="0 0 38 36"><path d="M2 2 L36 34 M36 2 L2 34" stroke="#CCCCCC" stroke-width="3" fill="none"/></svg>
<div class="a t" style="left:136.06px;top:38.30px;font-family:'Liberation Sans',sans-serif;font-size:42px;line-height:42px;font-weight:400;color:#CCCCCC;transform:scaleX(0.9792);transform-origin:0 0">File</div>
<div class="a t" style="left:249.99px;top:38.30px;font-family:'Liberation Sans',sans-serif;font-size:42px;line-height:42px;font-weight:400;color:#CCCCCC;transform:scaleX(1.0043);transform-origin:0 0">Edit</div>
<div class="a t" style="left:374.02px;top:38.30px;font-family:'Liberation Sans',sans-serif;font-size:42px;line-height:42px;font-weight:400;color:#CCCCCC;transform:scaleX(0.9798);transform-origin:0 0">Selection</div>
<div class="a t" style="left:593.50px;top:38.30px;font-family:'Liberation Sans',sans-serif;font-size:42px;line-height:42px;font-weight:400;color:#CCCCCC;transform:scaleX(0.9731);transform-origin:0 0">View</div>
<div class="a t" style="left:731.59px;top:38.30px;font-family:'Liberation Sans',sans-serif;font-size:42px;line-height:42px;font-weight:400;color:#CCCCCC;transform:scaleX(1.0044);transform-origin:0 0">Go</div>
<div class="a t" style="left:836.03px;top:38.30px;font-family:'Liberation Sans',sans-serif;font-size:42px;line-height:42px;font-weight:400;color:#CCCCCC;transform:scaleX(0.9904);transform-origin:0 0">Run</div>
<div class="a t" style="left:2114.00px;top:39.00px;font-family:'Liberation Sans',sans-serif;font-size:42px;line-height:42px;font-weight:400;color:#CCCCCC;transform:scaleX(0.9226);transform-origin:0 0">AZ-Linked-Temp</div>
<div class="a t" style="left:218.30px;top:154.25px;font-family:'Liberation Sans',sans-serif;font-size:35px;line-height:35px;font-weight:400;color:#C0C0C0;transform:scaleX(0.8514);transform-origin:0 0">EXPLORER</div>
<div class="a t" style="left:220.00px;top:244.18px;font-family:'Liberation Sans',sans-serif;font-size:34.5px;line-height:34.5px;font-weight:700;color:#CCCCCC;transform:scaleX(1.0130);transform-origin:0 0">AZ-LINKED-TEMP</div>
<div class="a t" style="left:264.02px;top:312.30px;font-family:'Liberation Sans',sans-serif;font-size:42px;line-height:42px;font-weight:400;color:#F48771;transform:scaleX(0.9925);transform-origin:0 0">mainTemp.json</div>
<div class="a t" style="left:731.87px;top:312.30px;font-family:'Liberation Sans',sans-serif;font-size:42px;line-height:42px;font-weight:400;color:#F48771;transform:scaleX(0.7105);transform-origin:0 0">1</div>
<div class="a t" style="left:265.01px;top:383.00px;font-family:'Liberation Sans',sans-serif;font-size:42px;line-height:42px;font-weight:400;color:#F48771;transform:scaleX(0.9861);transform-origin:0 0">storageTemp.json</div>
<div class="a t" style="left:731.87px;top:383.00px;font-family:'Liberation Sans',sans-serif;font-size:42px;line-height:42px;font-weight:400;color:#F48771;transform:scaleX(0.7105);transform-origin:0 0">1</div>
<div class="a t" style="left:266.00px;top:453.00px;font-family:'Liberation Sans',sans-serif;font-size:42px;line-height:42px;font-weight:400;color:#F48771;transform:scaleX(0.9827);transform-origin:0 0">vnetTemp.json</div>
<div class="a t" style="left:725.61px;top:453.00px;font-family:'Liberation Sans',sans-serif;font-size:42px;line-height:42px;font-weight:400;color:#F48771;transform:scaleX(0.9950);transform-origin:0 0">2</div>
<div class="a t" style="left:218.00px;top:2082.18px;font-family:'Liberation Sans',sans-serif;font-size:34.5px;line-height:34.5px;font-weight:700;color:#CCCCCC;transform:scaleX(0.9973);transform-origin:0 0">OUTLINE</div>
<div class="a t" style="left:219.00px;top:2152.98px;font-family:'Liberation Sans',sans-serif;font-size:34.5px;line-height:34.5px;font-weight:700;color:#CCCCCC;transform:scaleX(1.0089);transform-origin:0 0">TIMELINE</div>
<div class="a t" style="left:219.00px;top:2223.48px;font-family:'Liberation Sans',sans-serif;font-size:34.5px;line-height:34.5px;font-weight:700;color:#CCCCCC;transform:scaleX(0.9931);transform-origin:0 0">ARM TEMPLATE OUTLINE</div>
<div class="a t" style="left:901.72px;top:150.80px;font-family:'Liberation Sans',sans-serif;font-size:42px;line-height:42px;font-weight:400;color:#F48771;transform:scaleX(0.9881);transform-origin:0 0">mainTemp.json</div>
<div class="a t" style="left:1192.79px;top:150.80px;font-family:'Liberation Sans',sans-serif;font-size:42px;line-height:42px;font-weight:400;color:#CF7868;transform:scaleX(0.7368);transform-origin:0 0">1</div>
<div class="a t" style="left:1406.42px;top:150.80px;font-family:'Liberation Sans',sans-serif;font-size:42px;line-height:42px;font-weight:400;color:#F48771;transform:scaleX(0.9825);transform-origin:0 0">storageTemp.json</div>
<div class="a t" style="left:1746.95px;top:150.80px;font-family:'Liberation Sans',sans-serif;font-size:42px;line-height:42px;font-weight:400;color:#CF7868;transform:scaleX(0.6842);transform-origin:0 0">1</div>
<div class="a t" style="left:1960.00px;top:150.80px;font-family:'Liberation Sans',sans-serif;font-size:42px;line-height:42px;font-weight:400;color:#F48771;transform:scaleX(0.9834);transform-origin:0 0">vnetTemp.json</div>
<div class="a t" style="left:2238.60px;top:150.80px;font-family:'Liberation Sans',sans-serif;font-size:42px;line-height:42px;font-weight:400;color:#CF7868;transform:scaleX(1.0000);transform-origin:0 0">2</div>
<div class="a t" style="left:922.00px;top:240.70px;font-family:'Liberation Sans',sans-serif;font-size:42px;line-height:42px;font-weight:400;color:#A9A9A9;transform:scaleX(0.9834);transform-origin:0 0">vnetTemp.json</div>
<div class="a t" style="left:1612.99px;top:1341.58px;font-family:'Liberation Sans',sans-serif;font-size:38.5px;line-height:38.5px;font-weight:400;color:#8E8E8E;transform:scaleX(1.0021);transform-origin:0 0">Parent: [format('{0}-vnet-{1}',parameters('projectName'),'01')] (virtualNetworks)</div>
<div class="a t" style="left:1612.99px;top:1760.47px;font-family:'Liberation Sans',sans-serif;font-size:38.5px;line-height:38.5px;font-weight:400;color:#8E8E8E;transform:scaleX(1.0021);transform-origin:0 0">Parent: [format('{0}-vnet-{1}',parameters('projectName'),'01')] (virtualNetworks)</div>
<div class="a t" style="left:96.00px;top:201.45px;font-family:'Liberation Sans',sans-serif;font-size:33px;line-height:33px;font-weight:700;color:#FFFFFF;transform:scaleX(0.8333);transform-origin:0 0">3</div>
<div class="a t" style="left:95.50px;top:819.95px;font-family:'Liberation Sans',sans-serif;font-size:33px;line-height:33px;font-weight:700;color:#FFFFFF;transform:scaleX(0.7500);transform-origin:0 0">1</div>
</body></html>
